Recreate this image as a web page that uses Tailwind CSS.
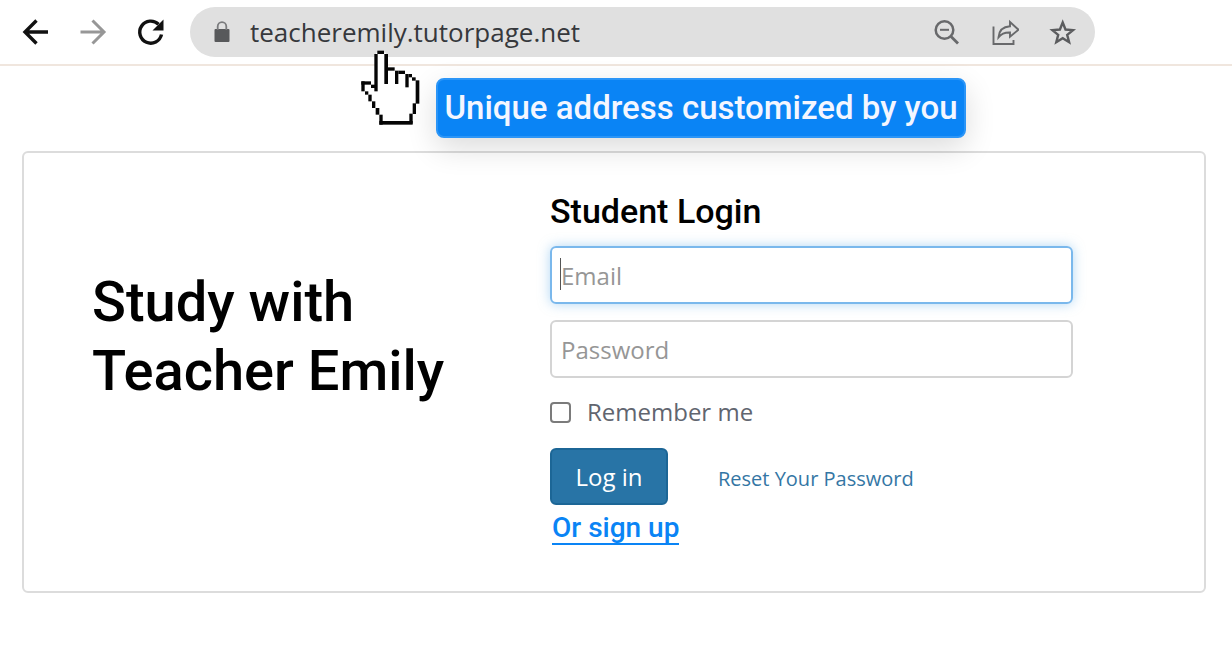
<!DOCTYPE html>
<html lang="en">
<head>
  <meta charset="UTF-8">
  <meta name="viewport" content="width=device-width, initial-scale=1.0">
  <title>Study with Teacher Emily</title>
  <script src="https://cdn.jsdelivr.net/npm/@tailwindcss/browser@4"></script>
</head>
<body class="min-h-screen bg-white font-['Open_Sans',sans-serif]">

  <!-- Browser Bar -->
  <header class="relative flex items-center h-[66px] border-b-2 border-[#f0e6de] pl-5 pr-[137px]">
    <nav class="flex items-center gap-7 mr-6">
      <button type="button" aria-label="Back">
        <svg class="w-[30px] h-[30px]" viewBox="0 0 30 30" fill="none" stroke="#111" stroke-width="3.4"><path d="M28 15H5M16.5 3.5L5 15l11.500 11.500"/></svg>
      </button>
      <button type="button" aria-label="Forward">
        <svg class="w-[30px] h-[30px]" viewBox="0 0 30 30" fill="none" stroke="#979797" stroke-width="3"><path d="M2.500 15H26M14.500 3.500L26 15 14.500 26.500"/></svg>
      </button>
      <button type="button" aria-label="Reload">
        <svg class="w-[30px] h-[30px]" viewBox="0 0 30 30" fill="none"><path d="M25.500 17.500A11 11 0 1 1 22.500 7.300" stroke="#111" stroke-width="3.400"/><path d="M27.500 2.500V13.500H16.500z" fill="#111"/></svg>
      </button>
    </nav>
    <div class="flex flex-1 items-center h-[50px] rounded-full bg-[#e0e0e0] pl-6 pr-[18px]">
      <svg class="w-4 h-[22px]" viewBox="0 0 16 22"><rect x="0.500" y="8" width="15" height="13" rx="1" fill="#58595b"/><path d="M3.700 9V5.500a4.300 4.300 0 0 1 8.600 0V9" fill="none" stroke="#7a7b7d" stroke-width="1.800"/></svg>
      <span class="flex-1 ml-5 text-[26px] leading-8 text-[#36383c]">teacheremily.tutorpage.net</span>
      <div class="flex items-center gap-7">
        <button type="button" aria-label="Zoom out">
          <svg class="w-[30px] h-[30px]" viewBox="0 0 30 30" fill="none" stroke="#68696b"><circle cx="13.500" cy="13" r="8.800" stroke-width="2.500"/><path d="M9 12.800h9" stroke-width="2"/><path d="M20 19.500l7 7" stroke-width="2.800"/></svg>
        </button>
        <button type="button" aria-label="Share">
          <svg class="w-[30px] h-[30px]" viewBox="0 0 30 30" fill="none" stroke="#68696b" stroke-width="1.900"><path d="M4.500 9.500V27h20v-4"/><path d="M21.500 5L30 12.700l-8.500 7v-4.200c-5-.2-8.500 1-11.500 4.800.5-6 4-10.500 11.500-11z" transform="translate(-0.500 0)"/></svg>
        </button>
        <button type="button" aria-label="Bookmark">
          <svg class="w-[30px] h-[30px]" viewBox="0 0 30 30" fill="none" stroke="#5b5c5e" stroke-width="2.400"><path d="M15.700 5.500l2.800 7 7.500.6-5.800 4.800 1.900 7.300-6.400-4-6.400 4 1.900-7.300-5.800-4.800 7.500-.6z"/></svg>
        </button>
      </div>
    </div>

    <!-- Address Callout -->
    <p class="absolute z-10 left-[436px] top-[78px] flex items-center justify-center w-[530px] h-[60px] rounded-lg border-2 border-[#2b95f7] bg-[#0a84f5] shadow-[0_10px_30px_rgba(0,0,0,0.14)] whitespace-nowrap font-['Roboto',sans-serif] text-[33px] font-medium text-[#f4f6ff]">Unique address customized by you</p>

    <!-- Hand Pointer -->
    <svg class="absolute z-20 left-[360px] top-[50px] w-[61px] h-[76px]" viewBox="30 30 183 228" aria-hidden="true">
      <path fill="#fff" d="M78 38h30v50h27v9h28v10h22v10h18v73h-10v32h-10v26H92v-22H82v-20H71v-20H60v-20H49v-10H39v-26h30v10h9z"/>
      <g fill="#050505">
        <rect x="82" y="32" width="20" height="10"/>
        <rect x="73" y="42" width="10" height="112"/>
        <rect x="103" y="42" width="11" height="90"/>
        <rect x="114" y="82" width="20" height="10"/>
        <rect x="135" y="92" width="10" height="40"/>
        <rect x="145" y="92" width="20" height="10"/>
        <rect x="166" y="102" width="10" height="40"/>
        <rect x="176" y="102" width="10" height="10"/>
        <rect x="186" y="112" width="11" height="10"/>
        <rect x="197" y="121" width="11" height="70"/>
        <rect x="188" y="190" width="10" height="32"/>
        <rect x="178" y="221" width="10" height="30"/>
        <rect x="88" y="243" width="100" height="11"/>
        <rect x="88" y="224" width="10" height="30"/>
        <rect x="77" y="204" width="11" height="20"/>
        <rect x="66" y="184" width="10" height="20"/>
        <rect x="55" y="164" width="10" height="20"/>
        <rect x="45" y="154" width="10" height="10"/>
        <rect x="34" y="124" width="10" height="30"/>
        <rect x="34" y="124" width="29" height="10"/>
        <rect x="63" y="134" width="12" height="10"/>
      </g>
    </svg>
  </header>

  <!-- Login Card -->
  <main class="grid grid-cols-[526fr_654fr] mt-[85px] ml-[22px] mr-[26px] rounded-md border-2 border-[#dcdcdc]">
    <h1 class="pl-[68px] pt-[115px] font-['Roboto',sans-serif] text-[56px] leading-[69px] font-medium text-black">Study with<br>Teacher Emily</h1>

    <form class="pt-9 pb-[46px] pr-[131px]">
      <h2 class="h-[57px] font-['Roboto',sans-serif] text-[34px] leading-[44px] font-medium text-black">Student Login</h2>
      <div class="relative">
        <input class="block w-full h-[58px] rounded-md border-2 border-[#7ab8ec] px-[9px] text-2xl text-gray-700 placeholder:text-[#969696] shadow-[0_0_12px_rgba(102,175,233,0.5)] outline-none" type="email" id="email" aria-label="Email" placeholder="Email">
        <span class="absolute left-[10px] top-3 w-px h-8 bg-[#555]"></span>
      </div>
      <input class="block w-full h-[58px] mt-4 rounded-md border-2 border-[#d4d4d4] px-[9px] text-2xl text-gray-700 placeholder:text-[#969696] outline-none" type="password" id="password" aria-label="Password" placeholder="Password">
      <div class="flex items-center mt-4 h-9">
        <input class="appearance-none w-[21px] h-[21px] rounded border-2 border-[#7b7b7b] bg-white checked:bg-[#2874a6]" type="checkbox" id="remember">
        <label class="ml-4 text-2xl text-[#61656f]" for="remember">Remember me</label>
      </div>
      <div class="flex items-center mt-[18px]">
        <button class="w-[118px] h-[57px] rounded-md border-2 border-[#1c6696] bg-[#2874a6] text-2xl text-white" type="submit">Log in</button>
        <a class="ml-[50px] mt-1 text-xl text-[#3476a4]" href="#reset">Reset Your Password</a>
      </div>
      <a class="inline-block ml-[2px] mt-2 border-b-2 border-[#0a84f5] font-['Roboto',sans-serif] text-[28px] leading-[30px] font-medium text-[#0a84f5]" href="#signup">Or sign up</a>
    </form>
  </main>

</body>
</html>
